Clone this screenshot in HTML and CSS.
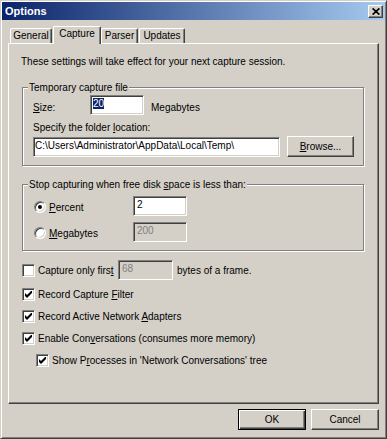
FILE: index.html
```html
<!DOCTYPE html>
<html>
<head>
<meta charset="utf-8">
<title>Options</title>
<link rel="stylesheet" href="styles.css">
</head>
<body>
<div class="window">
  <div class="titlebar">
    <span class="title">Options</span>
    <span class="close"><svg width="8" height="7" viewBox="0 0 8 7"><path d="M0.6 0.4 L7.4 6.6 M7.4 0.4 L0.6 6.6" stroke="#000" stroke-width="1.7" fill="none"/></svg></span>
  </div>
  <div class="body">
    <div class="tabs">
      <div class="tab tab-general">General</div>
      <div class="tab tab-capture active">Capture</div>
      <div class="tab tab-parser">Parser</div>
      <div class="tab tab-updates">Updates</div>
    </div>
    <div class="panel">
      <p class="intro">These settings will take effect for your next capture session.</p>

      <fieldset class="group group-temp">
        <legend>Temporary capture file</legend>
        <div class="row">
          <span class="lbl size-lbl"><u>S</u>ize:</span>
          <div class="edit size-edit"><span class="sel">20</span></div>
          <span class="lbl unit">Megabytes</span>
        </div>
        <div class="lbl folder-lbl">Specify the folder <u>l</u>ocation:</div>
        <div class="row path-row">
          <div class="edit path-edit">C:\Users\Administrator\AppData\Local\Temp\</div>
          <div class="btn browse"><u>B</u>rowse...</div>
        </div>
      </fieldset>

      <fieldset class="group group-stop">
        <legend>Stop capturing when free disk <u>s</u>pace is less than:</legend>
        <div class="row">
          <div class="opt">
            <span class="radio on"></span>
            <span class="lbl"><u>P</u>ercent</span>
          </div>
          <div class="edit num-edit">2</div>
        </div>
        <div class="row row-mb">
          <div class="opt">
            <span class="radio"></span>
            <span class="lbl"><u>M</u>egabytes</span>
          </div>
          <div class="edit num-edit disabled">200</div>
        </div>
      </fieldset>

      <div class="row first-row">
        <div class="opt opt-first">
          <span class="cb"></span>
          <span class="lbl">Capture only firs<u>t</u></span>
        </div>
        <div class="edit bytes-edit disabled">68</div>
        <span class="lbl bytes-lbl">bytes of a frame.</span>
      </div>

      <div class="checks">
        <div class="check-row">
          <span class="cb"><svg width="7" height="7" viewBox="0 0 7 7"><path d="M0 2 L2 4 L7 -1 L7 2 L2 7 L0 5 Z" fill="#000"/></svg></span>
          <span class="lbl">Record Capture <u>F</u>ilter</span>
        </div>
        <div class="check-row">
          <span class="cb"><svg width="7" height="7" viewBox="0 0 7 7"><path d="M0 2 L2 4 L7 -1 L7 2 L2 7 L0 5 Z" fill="#000"/></svg></span>
          <span class="lbl">Record Active Network <u>A</u>dapters</span>
        </div>
        <div class="check-row">
          <span class="cb"><svg width="7" height="7" viewBox="0 0 7 7"><path d="M0 2 L2 4 L7 -1 L7 2 L2 7 L0 5 Z" fill="#000"/></svg></span>
          <span class="lbl">Enable Con<u>v</u>ersations (consumes more memory)</span>
        </div>
        <div class="check-row indent">
          <span class="cb"><svg width="7" height="7" viewBox="0 0 7 7"><path d="M0 2 L2 4 L7 -1 L7 2 L2 7 L0 5 Z" fill="#000"/></svg></span>
          <span class="lbl">Show P<u>r</u>ocesses in 'Network Conversations' tree</span>
        </div>
      </div>
    </div>
    <div class="buttons">
      <div class="btn dlg-btn default">OK</div>
      <div class="btn dlg-btn">Cancel</div>
    </div>
  </div>
</div>
</body>
</html>
```

FILE: styles.css
```css
* { box-sizing: border-box; }

body {
  margin: 0;
  background: #D4D0C8;
  font-family: "Liberation Sans", Arial, sans-serif;
  font-size: 10px;
  line-height: 13px;
  color: #000;
}

u { text-decoration: underline; text-underline-offset: 1px; }

.window {
  width: 387px;
  height: 439px;
  border: 1px solid;
  border-color: #D4D0C8 #404040 #404040 #D4D0C8;
  box-shadow: inset 1px 1px #fff, inset -1px -1px #808080;
  padding: 1px;
  display: flex;
  flex-direction: column;
  background: #D4D0C8;
}

.titlebar {
  height: 18px;
  flex: none;
  background: linear-gradient(to right, #0A246A, #A6CAF0);
  display: flex;
  align-items: center;
  justify-content: space-between;
  padding: 0 2px 0 3px;
}

.title {
  color: #fff;
  font-weight: bold;
  font-size: 11px;
}

.close {
  width: 15px;
  height: 13px;
  background: #D4D0C8;
  border: 1px solid;
  border-color: #fff #404040 #404040 #fff;
  box-shadow: inset -1px -1px #808080;
  display: flex;
  align-items: center;
  justify-content: center;
}

.body {
  flex: 1;
  padding: 0 6px;
  display: flex;
  flex-direction: column;
}

.tabs {
  display: flex;
  align-items: flex-end;
  height: 17px;
  margin-top: 6px;
  padding-left: 2px;
  flex: none;
}

.tab {
  height: 15px;
  border-top: 1px solid #fff;
  border-left: 1px solid #fff;
  border-right: 1px solid #404040;
  border-radius: 2px 2px 0 0;
  box-shadow: inset -1px 0 #808080;
  text-align: center;
  line-height: 13px;
  background: #D4D0C8;
}

.tab-general { width: 42px; }
.tab-capture { width: 48px; margin-left: 1px; }
.tab-parser { width: 37px; }
.tab-updates { width: 46px; margin-left: 1px; }

.tab.active {
  height: 18px;
  margin-bottom: -1px;
  line-height: 14px;
  position: relative;
  z-index: 1;
}

.panel {
  height: 361px;
  flex: none;
  border: 1px solid;
  border-color: #fff #404040 #404040 #fff;
  box-shadow: inset -1px -1px #808080;
  padding: 11px 14px 0 13px;
}

.intro {
  margin: 0 0 0 -1px;
  line-height: 13px;
}

.group {
  margin: 13px 0 0;
  border: 1px solid #808080;
  box-shadow: inset 1px 1px #fff, 1px 1px #fff;
  padding: 1px 10px 8px;
  min-width: 0;
}

.group legend {
  line-height: 13px;
  padding: 0 1px;
  margin-left: -5px;
  background: #D4D0C8;
}

.group-stop {
  margin-top: 12px;
  padding-top: 5px;
}

.row {
  display: flex;
  align-items: flex-start;
}

.lbl {
  line-height: 13px;
  white-space: nowrap;
}

.size-lbl {
  width: 57px;
  margin-top: 6px;
}

.unit {
  margin-left: 7px;
  margin-top: 6px;
}

.folder-lbl {
  margin-top: 6px;
}

.path-row {
  margin-top: 3px;
}

.edit {
  height: 20px;
  background: #fff;
  border: 1px solid;
  border-color: #808080 #fff #fff #808080;
  box-shadow: inset 1px 1px #404040, inset -1px -1px #D4D0C8;
  padding: 2px 2px 0;
  line-height: 11px;
  white-space: nowrap;
  overflow: hidden;
  flex: none;
}

.edit.disabled {
  background: #D4D0C8;
  color: #808080;
}

.size-edit { width: 54px; }
.path-edit { width: 247px; padding-left: 1px; }
.num-edit { width: 54px; padding-left: 3px; }
.bytes-edit { width: 55px; padding-left: 3px; }

.sel {
  background: #0A246A;
  color: #fff;
}

.btn {
  background: #D4D0C8;
  border: 1px solid;
  border-color: #fff #404040 #404040 #fff;
  box-shadow: inset -1px -1px #808080;
  display: flex;
  align-items: center;
  justify-content: center;
  flex: none;
}

.browse {
  width: 67px;
  height: 21px;
  margin-left: 7px;
  margin-top: -1px;
}

.opt {
  width: 100px;
  display: flex;
  align-items: flex-start;
  flex: none;
}

.opt .lbl { margin-top: 5px; }

.radio {
  width: 12px;
  height: 12px;
  margin: 5px 3px 0 1px;
  border-radius: 50%;
  border: 1px solid;
  border-color: #808080 #fff #fff #808080;
  box-shadow: inset 1px 1px #404040, inset -1px -1px #D4D0C8;
  background: #fff;
  display: flex;
  align-items: center;
  justify-content: center;
  flex: none;
}

.radio.on::after {
  content: "";
  width: 4px;
  height: 4px;
  border-radius: 50%;
  background: #000;
}

.row-mb { margin-top: 6px; }

.cb {
  width: 13px;
  height: 13px;
  border: 1px solid;
  border-color: #808080 #fff #fff #808080;
  box-shadow: inset 1px 1px #404040, inset -1px -1px #D4D0C8;
  background: #fff;
  display: flex;
  align-items: center;
  justify-content: center;
  flex: none;
}

.first-row { margin-top: 9px; }

.opt-first { width: 96px; }
.opt-first .cb { margin: 4px 3px 0 0; }
.opt-first .lbl { margin-top: 4px; }

.bytes-lbl {
  margin-left: 4px;
  margin-top: 4px;
}

.checks {
  margin-top: 8px;
  display: flex;
  flex-direction: column;
  gap: 9px;
}

.check-row {
  display: flex;
  align-items: center;
  gap: 3px;
  height: 13px;
}

.check-row.indent { padding-left: 14px; }

.buttons {
  display: flex;
  justify-content: flex-end;
  gap: 5px;
  margin-top: 5px;
}

.dlg-btn {
  width: 68px;
  height: 21px;
}

.dlg-btn.default {
  border: 1px solid #000;
  box-shadow: inset 1px 1px #fff, inset -1px -1px #404040, inset -2px -2px #808080;
}
```
